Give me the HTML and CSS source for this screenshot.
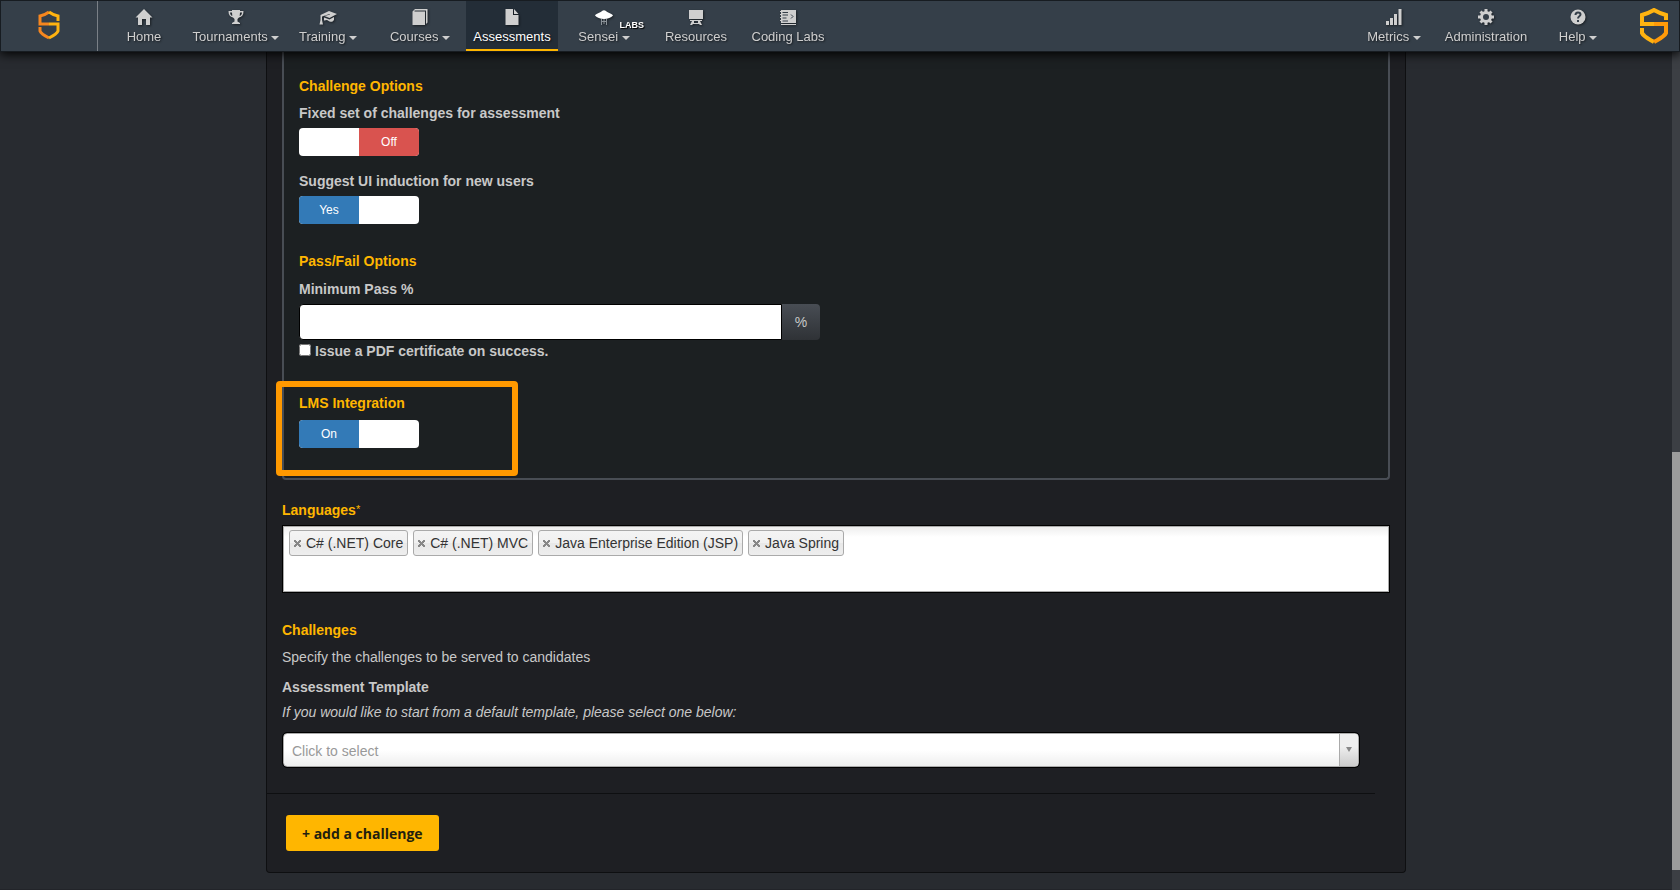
FILE: index.html
```
<!DOCTYPE html>
<html lang="en">
<head>
    <meta charset="UTF-8">
    <meta name="viewport" content="width=device-width, initial-scale=1.0">
    <title>Edit Assessment</title>
    <link rel="stylesheet" href="styles.css">
</head>
<body>
    <!-- Top navigation -->
    <header class="navbar">
        <a href="#" class="brand" aria-label="Dashboard">
            <svg width="22" height="30" viewBox="0 0 22 30">
                <path d="M11 2Q7 5 2 6v8h9" fill="none" stroke="#f6861f" stroke-width="3"/>
                <path d="M11 2q4 3 9 4v5" fill="none" stroke="#ffb310" stroke-width="3"/>
                <path d="M2 17v4c1 3 5 5 9 7" fill="none" stroke="#f6861f" stroke-width="3"/>
                <path d="M11 28c4-2 8-4 9-7v-7h-9" fill="none" stroke="#ffb310" stroke-width="3"/>
            </svg>
        </a>

        <nav class="nav-items">
            <a href="#" class="nav-item">
                <svg class="icon" viewBox="0 0 16 16"><path d="M8 0l8.500 8.500H14V16h-4v-6H6v6H2V8.500H-.5z"/></svg>
                <span>Home</span>
            </a>
            <a href="#" class="nav-item">
                <svg class="icon" viewBox="0 0 16 16"><path d="M4 1h8v1h3.500c0 4-1.500 6-4.500 6.500L9.500 10v2.500L12 14v1H4v-1l2.500-1.500V10L5 8.500C2 8 .5 6 .5 2H4zM2 3.500c.2 2 .8 3 2.300 3.500L4 3.500zm12 0h-2L11.700 7c1.500-.5 2.100-1.500 2.300-3.500z" fill-rule="evenodd"/></svg>
                <span>Tournaments <i class="caret"></i></span>
            </a>
            <a href="#" class="nav-item">
                <svg class="icon wide" viewBox="0 0 18 16"><path d="M10 2l8 3-7.500 4-5-2L11 5.500 10.500 5 3 7.500V11l1 4.500H.5l1-4.500V6z"/><path d="M5 8.500l5.500 2L15 8v3c-1.500 2-2.500 2-4.500 1.500L8 11l-3 .5z"/></svg>
                <span>Training <i class="caret"></i></span>
            </a>
            <a href="#" class="nav-item">
                <svg class="icon" viewBox="0 0 16 16"><path d="M3 0h12.500v13.500L14 15V1.500H2.500V2.500H13V16H.5V2.500z"/></svg>
                <span>Courses <i class="caret"></i></span>
            </a>
            <a href="#" class="nav-item active">
                <svg class="icon" viewBox="0 0 16 16"><path d="M1.500 0H9v6h5.500v10h-13zM10 0l4.500 5H10z"/></svg>
                <span>Assessments</span>
            </a>
            <a href="#" class="nav-item">
                <svg class="icon wide" viewBox="0 0 18 16"><path d="M0 6.500C1 4.500 5 4 7 2q2-1.500 4 0c2 2 6 2.500 7 4.500-2 2-5 3.500-9 3.500S2 8.500 0 6.500z" fill="#fff"/><path d="M6.500 10v6M9 10v5M11.500 10v6M6 12.500h6" stroke="#8b9298"/></svg>
                <span>Sensei <i class="caret"></i></span>
                <b class="labs">LABS</b>
            </a>
            <a href="#" class="nav-item">
                <svg class="icon" viewBox="0 0 16 16"><path d="M1 1h14v9H1zM2 11h12v1H2zM4 12h2v2h4v-2h2l2 4h-2l-1-1H5l-1 1H2z"/></svg>
                <span>Resources</span>
            </a>
            <a href="#" class="nav-item">
                <svg class="icon" viewBox="0 0 16 16"><path d="M1 1h15v13H1zM0 2h1v1H0zM0 5h1v1H0zM0 8h1v1H0zM0 11h1v1H0zM1 15h15v1H1z"/><path d="M2.500 3.500H8M2.500 6H8M2.500 9h4M2.500 12H8M11 5.500l2 2-2 2" fill="none" stroke="#353f49"/></svg>
                <span>Coding Labs</span>
            </a>
        </nav>

        <nav class="nav-items nav-right">
            <a href="#" class="nav-item">
                <svg class="icon" viewBox="0 0 16 16"><path d="M0 12h3v4H0zM4 9h3v7H4zM8 5h3v11H8zM12.500 0h3v16h-3z"/></svg>
                <span>Metrics <i class="caret"></i></span>
            </a>
            <a href="#" class="nav-item">
                <svg class="icon" viewBox="0 0 16 16"><path d="M8 0v16M0 8h16M2.500 2.500l11 11M13.500 2.500l-11 11" stroke="#cfcfcf" stroke-width="3"/><circle cx="8" cy="8" r="6"/><circle cx="8" cy="8" r="3" fill="#353f49" stroke="none"/></svg>
                <span>Administration</span>
            </a>
            <a href="#" class="nav-item">
                <svg class="icon" viewBox="0 0 16 16"><circle cx="8" cy="8" r="7.500"/><path d="M5.500 6c0-3.500 5-3 5-.5C10.500 7.500 8 7 8 9.500M8 11v2" fill="none" stroke="#353f49" stroke-width="2"/></svg>
                <span>Help <i class="caret"></i></span>
            </a>
        </nav>

        <a href="#" class="company" aria-label="Company">
            <svg width="28" height="36" viewBox="0 0 28 36">
                <path d="M26 12V7Q19 5 14 2 9 5 2 7v9h12" fill="none" stroke="#ffb310" stroke-width="4"/>
                <path d="M2 20v5c2 4 7 6 12 9" fill="none" stroke="#ffb310" stroke-width="4"/>
                <path d="M14 34c5-3 10-5 12-9v-9H14" fill="none" stroke="#ff9a0a" stroke-width="4"/>
            </svg>
        </a>
    </header>

    <main class="page">
        <form class="panel">
            <div class="options-box">
                <h4>Challenge Options</h4>
                <label for="fixedSet">Fixed set of challenges for assessment</label>
                <button type="button" id="fixedSet" class="toggle off" role="switch" aria-checked="false"><span>Off</span></button>

                <label for="induction" class="spaced">Suggest UI induction for new users</label>
                <button type="button" id="induction" class="toggle" role="switch" aria-checked="true"><span>Yes</span></button>

                <h4 class="pass-fail">Pass/Fail Options</h4>
                <label for="minPass">Minimum Pass %</label>
                <div class="input-group">
                    <input type="text" id="minPass">
                    <span class="addon">%</span>
                </div>
                <div class="check-row">
                    <input type="checkbox" id="certificate">
                    <label for="certificate">Issue a PDF certificate on success.</label>
                </div>

                <div class="lms">
                    <h4 id="lmsTitle">LMS Integration</h4>
                    <button type="button" class="toggle" role="switch" aria-checked="true" aria-labelledby="lmsTitle"><span>On</span></button>
                    <div class="highlight"></div>
                </div>
            </div>

            <!-- Languages -->
            <h4 class="languages-title">Languages<sup>*</sup></h4>
            <ul class="tag-list">
                <li><button type="button" class="remove" aria-label="Remove C# (.NET) Core"></button>C# (.NET) Core</li>
                <li><button type="button" class="remove" aria-label="Remove C# (.NET) MVC"></button>C# (.NET) MVC</li>
                <li><button type="button" class="remove" aria-label="Remove Java Enterprise Edition (JSP)"></button>Java Enterprise Edition (JSP)</li>
                <li><button type="button" class="remove" aria-label="Remove Java Spring"></button>Java Spring</li>
            </ul>

            <!-- Challenges -->
            <section class="challenges">
                <h4>Challenges</h4>
                <p>Specify the challenges to be served to candidates</p>
                <label for="template">Assessment Template</label>
                <p class="hint">If you would like to start from a default template, please select one below:</p>
                <div class="select-wrap">
                    <select id="template">
                        <option>Click to select</option>
                    </select>
                </div>
            </section>

            <div class="actions">
                <button type="button" class="add-btn">+ add a challenge</button>
            </div>
        </form>
    </main>

    <div class="scroll-track"><div class="scroll-thumb"></div></div>
</body>
</html>
```

FILE: styles.css
```
* {
    box-sizing: border-box;
}

body {
    margin: 0;
    background-color: #282b30;
    color: #c8c8c8;
    font-family: "Liberation Sans", Arial, sans-serif;
    font-size: 14px;
    line-height: 20px;
}

h4, p, ul {
    margin: 0;
    padding: 0;
}

button, input, select {
    font-family: inherit;
}

/* Navbar */
.navbar {
    position: sticky;
    top: 0;
    z-index: 10;
    display: flex;
    height: 52px;
    background-color: #353f49;
    border: 1px solid #171c21;
    box-shadow: 0 2px 10px #000;
}

.brand {
    display: flex;
    justify-content: center;
    align-items: center;
    width: 97px;
    padding-bottom: 2px;
    border-right: 1px solid #7a8087;
}

.nav-items {
    display: flex;
}

.nav-right {
    margin-left: auto;
}

.nav-item {
    position: relative;
    display: flex;
    flex-direction: column;
    align-items: center;
    width: 92px;
    padding-top: 8px;
    gap: 2px;
    color: #cfcfcf;
    font-size: 13px;
    line-height: 20px;
    text-decoration: none;
    text-shadow: 1px 1px 2px rgba(0, 0, 0, 0.6);
    white-space: nowrap;
}

.nav-item.active {
    background-color: #232d37;
    border-bottom: 2px solid #ffb600;
    color: #fff;
}

.icon {
    width: 16px;
    height: 16px;
    fill: #cfcfcf;
    overflow: visible;
    filter: drop-shadow(1px 1px 1px rgba(0, 0, 0, 0.5));
}

.icon.wide {
    width: 18px;
}

.caret {
    display: inline-block;
    vertical-align: middle;
    border-top: 4px solid #cfcfcf;
    border-left: 4px solid transparent;
    border-right: 4px solid transparent;
}

.labs {
    position: absolute;
    top: 16px;
    right: 6px;
    color: #fff;
    font-size: 9px;
    line-height: 16px;
    text-shadow: 1px 1px 1px #000;
}

.company {
    display: flex;
    justify-content: center;
    align-items: center;
    width: 55px;
    padding-left: 4px;
}

/* Page */
.page {
    margin-right: 8px;
    padding-bottom: 16px;
    border-bottom: 1px solid #222429;
}

.panel {
    max-width: 1140px;
    margin: 0 auto;
    background-color: #1e1f23;
    border: 1px solid #0e0f11;
    border-top: 0;
    border-radius: 0 0 4px 4px;
}

h4 {
    color: #ffb600;
    font-size: 14px;
    line-height: 20px;
}

label {
    display: block;
    font-weight: bold;
}

.options-box {
    margin: 0 15px;
    padding: 24px 15px 30px;
    background-color: #1c2022;
    border: 2px solid #484d54;
    border-top: 0;
    border-radius: 0 0 4px 4px;
}

.options-box h4 {
    margin-bottom: 7px;
}

.options-box .toggle {
    margin-top: 5px;
}

.options-box .spaced {
    margin-top: 15px;
}

.options-box .pass-fail {
    margin-top: 27px;
    margin-bottom: 8px;
}

/* On/Off switches */
.toggle {
    display: flex;
    width: 120px;
    height: 28px;
    padding: 0;
    border: 0;
    border-radius: 4px;
    overflow: hidden;
    background-color: #fff;
    color: #fff;
    font-size: 12px;
    line-height: 28px;
    cursor: pointer;
}

.toggle span {
    width: 50%;
    background-color: #337ab7;
}

.toggle.off {
    justify-content: flex-end;
}

.toggle.off span {
    background-color: #d9534f;
}

.input-group {
    display: flex;
    max-width: 521px;
    height: 36px;
    margin-top: 5px;
}

.input-group input {
    flex: 1;
    min-width: 0;
    border: 1px solid #000;
    border-radius: 4px 0 0 4px;
    background-color: #fff;
}

.addon {
    width: 38px;
    border-radius: 0 4px 4px 0;
    background: linear-gradient(#484d54, #2f3236);
    line-height: 36px;
    text-align: center;
}

.check-row {
    display: flex;
    gap: 4px;
    margin-top: 1px;
}

.check-row input {
    width: 12px;
    height: 12px;
    margin: 3px 0 0;
}

.lms {
    position: relative;
    margin-top: 32px;
}

.options-box .lms h4 {
    margin-bottom: 0;
}

.options-box .lms .toggle {
    margin-top: 7px;
}

.highlight {
    position: absolute;
    top: -12px;
    left: -23px;
    width: 242px;
    height: 95px;
    border: 6px solid #ff9900;
    border-radius: 4px;
}

/* Languages */
.languages-title {
    margin: 20px 15px 6px;
}

.languages-title sup {
    font-size: 11px;
    font-weight: normal;
    line-height: 0;
    vertical-align: 2px;
}

.tag-list {
    display: flex;
    flex-wrap: wrap;
    align-items: flex-start;
    gap: 5px;
    min-height: 66px;
    margin: 0 16px;
    padding: 3px 5px;
    background: linear-gradient(#eee, #fff 10px);
    border: 1px solid #aaa;
    outline: 1px solid #000;
    list-style: none;
}

.tag-list li {
    display: flex;
    align-items: center;
    gap: 5px;
    height: 26px;
    padding: 0 4px;
    border: 1px solid #aaa;
    border-radius: 3px;
    background: linear-gradient(#f4f4f4, #f0f0f0 50%, #e8e8e8 52%, #eee);
    color: #333;
}

.remove {
    width: 7px;
    height: 7px;
    padding: 0;
    border: 0;
    background: linear-gradient(45deg, transparent 36%, #888 36%, #888 64%, transparent 64%),
        linear-gradient(-45deg, transparent 36%, #888 36%, #888 64%, transparent 64%);
    cursor: pointer;
}

/* Challenges */
.challenges {
    margin-right: 30px;
    padding: 28px 15px 26px;
    border-bottom: 1px solid #0e0f11;
}

.challenges p {
    margin-top: 7px;
}

.challenges label {
    margin-top: 10px;
}

.challenges .hint {
    margin-top: 5px;
    font-style: italic;
}

.select-wrap {
    position: relative;
    margin: 11px 1px 0;
}

.select-wrap select {
    display: block;
    width: 100%;
    height: 34px;
    padding: 2px 8px 0;
    appearance: none;
    border: 1px solid #aaa;
    border-radius: 4px;
    outline: 1px solid #000;
    background: linear-gradient(#fff 50%, #eee);
    color: #999;
    font-size: 14px;
}

.select-wrap::before {
    content: "";
    position: absolute;
    top: 1px;
    right: 1px;
    bottom: 1px;
    width: 18px;
    border-left: 1px solid #aaa;
    border-radius: 0 3px 3px 0;
    background: linear-gradient(#eee 40%, #ccc);
    pointer-events: none;
}

.select-wrap::after {
    content: "";
    position: absolute;
    top: 14px;
    right: 7px;
    border-top: 5px solid #888;
    border-left: 3px solid transparent;
    border-right: 3px solid transparent;
    pointer-events: none;
}

.actions {
    padding: 21px 19px;
}

.add-btn {
    height: 36px;
    padding: 0 16px;
    border: 0;
    border-radius: 3px;
    background-color: #ffb600;
    color: #231f0f;
    font-family: "Open Sans", sans-serif;
    font-size: 14px;
    font-weight: bold;
    cursor: pointer;
}

/* Scrollbar */
.scroll-track {
    position: fixed;
    top: 0;
    right: 0;
    bottom: 0;
    width: 8px;
    background-color: #3c3f44;
}

.scroll-thumb {
    position: absolute;
    top: 50.8%;
    width: 100%;
    height: 46.9%;
    background-color: #9c9c9c;
}
```
